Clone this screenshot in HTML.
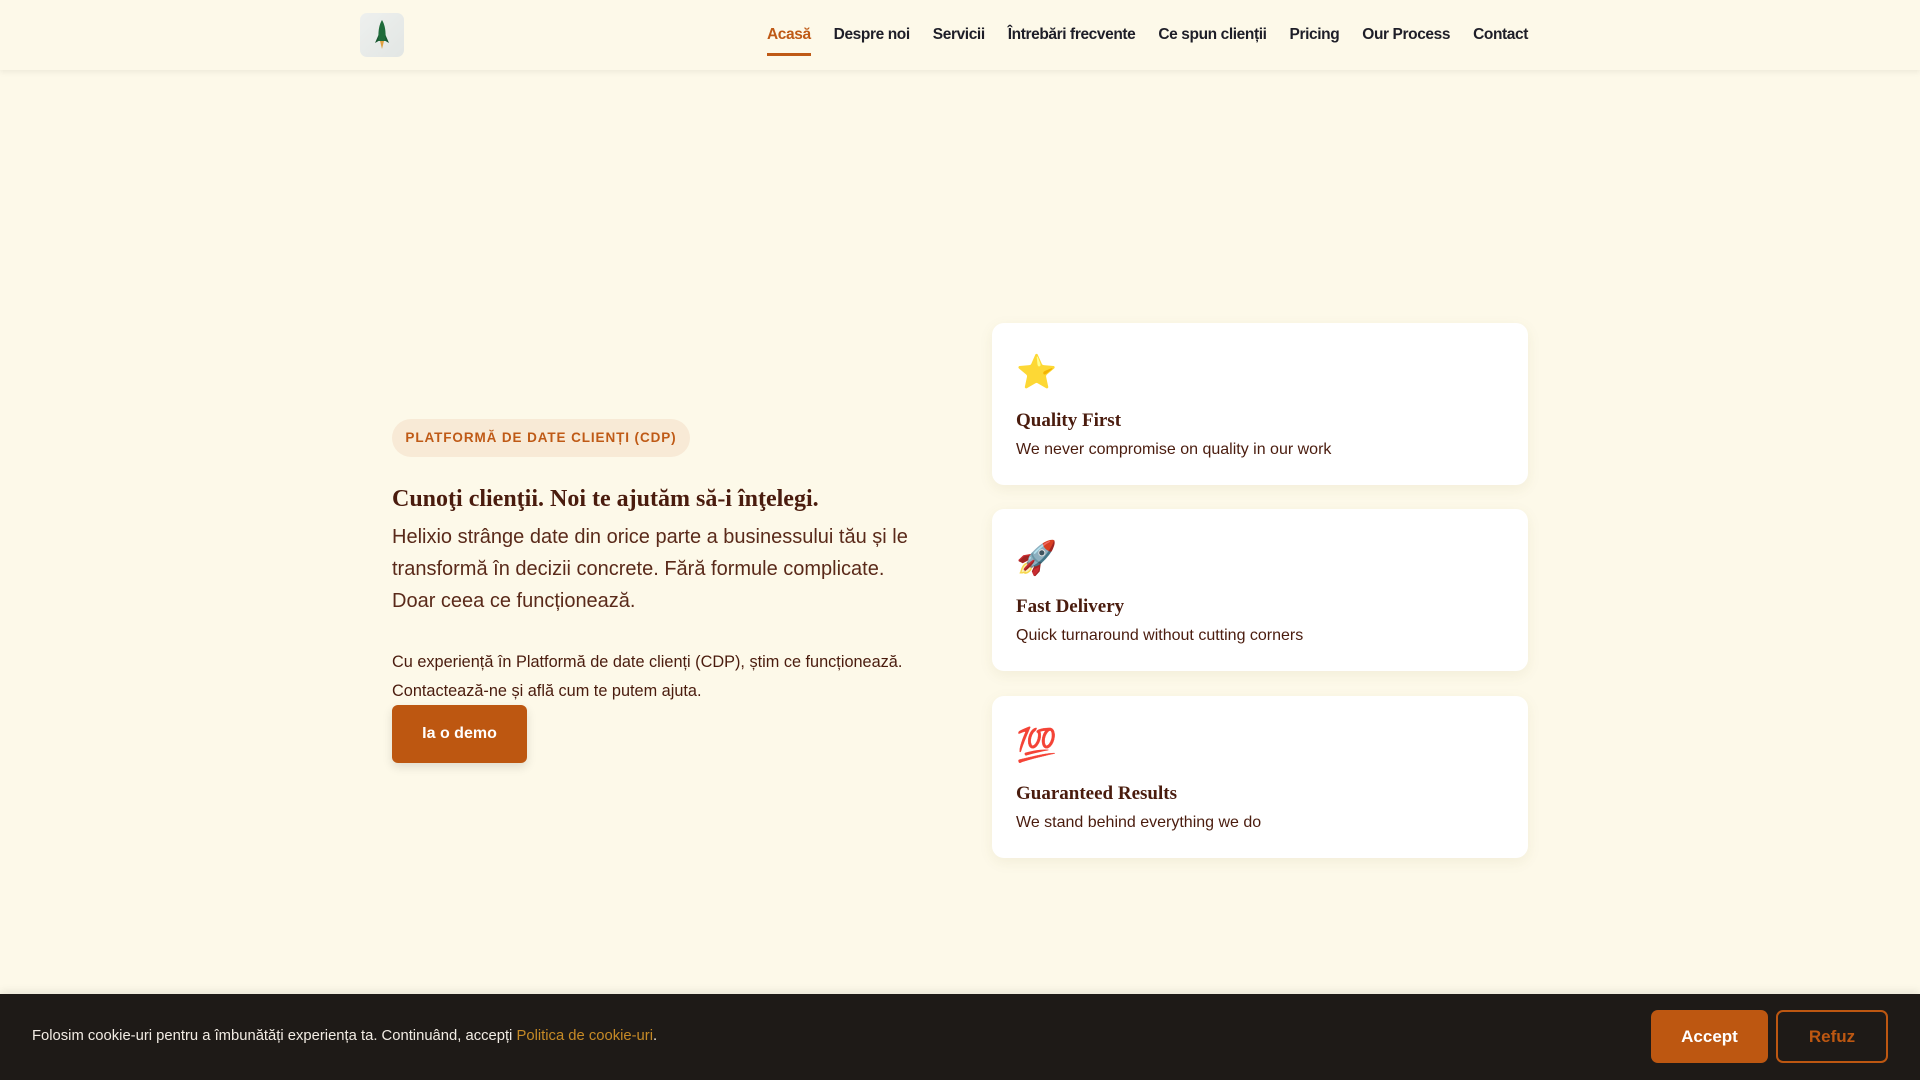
<!DOCTYPE html>
<html><head><meta charset="utf-8"><style>
*{box-sizing:border-box;margin:0;padding:0}
body{width:1920px;height:1080px;overflow:hidden;background:#fdf9e9;font-family:"Liberation Sans","DejaVu Sans",sans-serif;color:#4a1c0e;position:relative}
.nav{position:absolute;left:0;top:0;width:1920px;height:70px;background:#fdf9e9;box-shadow:0 2px 6px rgba(0,0,0,.07)}
.logo{position:absolute;left:360px;top:13px;width:44px;height:44px;border-radius:7px;background:linear-gradient(135deg,#eef0ee,#e2e6e4)}
.menu{position:absolute;right:392px;top:26px;display:flex;gap:23px;font-size:15.5px;font-weight:bold;color:#1e1e28;letter-spacing:-.4px}
.menu span{position:relative}
.menu .act{color:#bf5a16}
.menu .act:after{content:"";position:absolute;left:0;right:0;top:27px;height:3px;background:#bf5a16}
.badge{position:absolute;left:392px;top:419px;width:298px;height:38px;border-radius:19px;background:#f8ead6;color:#bf5a16;font-size:13.5px;font-weight:bold;letter-spacing:.9px;line-height:38px;text-align:center}
h1{position:absolute;left:392px;top:486px;font-family:"Liberation Serif",serif;font-size:24px;font-weight:bold;color:#4a1c0e;white-space:nowrap}
.lead{position:absolute;left:392px;top:521px;width:540px;font-size:20px;line-height:32px;color:#5a2a1a}
.sub{position:absolute;left:392px;top:648px;width:580px;font-size:16.3px;line-height:29px;color:#4a1c0e}
.btn{position:absolute;left:392px;top:705px;width:135px;height:58px;border-radius:6px;background:#bd5711;color:#fff;font-weight:bold;font-size:16px;line-height:58px;text-align:center;box-shadow:0 4px 10px rgba(0,0,0,.12)}
.card{position:absolute;left:992px;width:536px;height:162px;background:#fff;border-radius:12px;box-shadow:0 4px 14px rgba(120,100,40,.08);padding:30px 24px}
.ic{font-size:33px;line-height:40px;height:40px;font-family:"Noto Color Emoji","DejaVu Sans",sans-serif}
.card h3{font-family:"Liberation Serif",serif;font-size:19px;font-weight:bold;margin-top:17px;color:#4a1c0e}
.card p{font-size:16px;margin-top:9px;color:#4a1c0e}
.cookie{position:absolute;left:0;top:994px;width:1920px;height:86px;background:#1e1a17;box-shadow:0 -3px 8px rgba(0,0,0,.08)}
.ctext{position:absolute;left:32px;top:34px;font-size:14.8px;color:#f2ece4}
.ctext a{color:#c68a26;text-decoration:none}
.acc{position:absolute;left:1651px;top:16px;width:117px;height:53px;border-radius:7px;background:#bd5711;color:#fff;font-weight:bold;font-size:17px;line-height:53px;text-align:center}
.ref{position:absolute;left:1776px;top:16px;width:112px;height:53px;border-radius:7px;border:2px solid #bd5711;color:#bd5711;font-weight:bold;font-size:17px;line-height:49px;text-align:center}
</style></head><body>
<div class="nav">
<div class="logo"><svg width="44" height="44" viewBox="0 0 44 44"><path d="M22 7 C25 12 26 18 25.5 28 L18.5 28 C18 18 19 12 22 7Z" fill="#1f6b3a"/><path d="M18.5 22 L15 30 L18.5 28Z M25.5 22 L29 30 L25.5 28Z" fill="#175530"/><path d="M20 28 L24 28 L22 36Z" fill="#e0a040"/></svg></div>
<div class="menu"><span class="act">Acasă</span><span>Despre noi</span><span>Servicii</span><span>Întrebări frecvente</span><span>Ce spun clienții</span><span>Pricing</span><span>Our Process</span><span>Contact</span></div>
</div>
<div class="badge">PLATFORMĂ DE DATE CLIENȚI (CDP)</div>
<h1>Cunoţi clienţii. Noi te ajutăm să-i înţelegi.</h1>
<div class="lead">Helixio strânge date din orice parte a businessului tău și le transformă în decizii concrete. Fără formule complicate. Doar ceea ce funcționează.</div>
<div class="sub">Cu experiență în Platformă de date clienți (CDP), știm ce funcționează. Contactează-ne și află cum te putem ajuta.</div>
<div class="btn">Ia o demo</div>
<div class="card" style="top:323px"><div class="ic">⭐</div><h3>Quality First</h3><p>We never compromise on quality in our work</p></div>
<div class="card" style="top:509px"><div class="ic">🚀</div><h3>Fast Delivery</h3><p>Quick turnaround without cutting corners</p></div>
<div class="card" style="top:696px"><div class="ic">💯</div><h3>Guaranteed Results</h3><p>We stand behind everything we do</p></div>
<div class="cookie"><div class="ctext">Folosim cookie-uri pentru a îmbunătăți experiența ta. Continuând, accepți <a>Politica de cookie-uri</a>.</div><div class="acc">Accept</div><div class="ref">Refuz</div></div>
</body></html>
